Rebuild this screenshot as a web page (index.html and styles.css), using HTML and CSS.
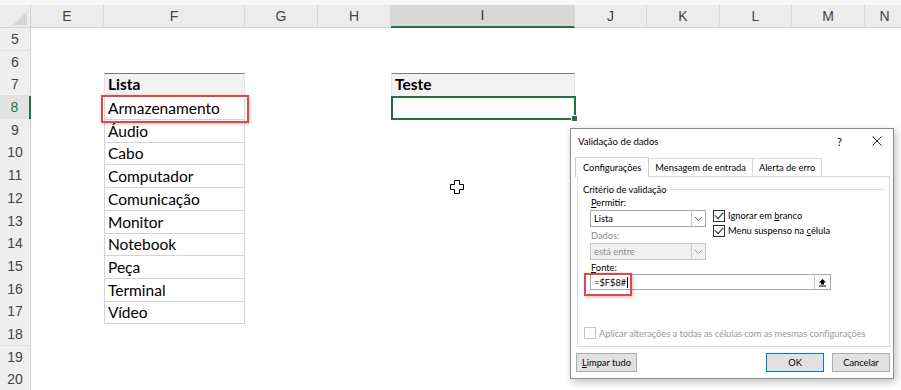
FILE: index.html
```html
<!DOCTYPE html>
<html lang="pt">
<head>
  <meta charset="UTF-8">
  <title>Validação de dados</title>
  <link rel="stylesheet" href="styles.css">
</head>
<body>

<div class="sheet">
  <div class="topstrip"></div>

  <div class="row head">
    <div class="corner"><span class="tri"></span></div>
    <div class="colhead">E</div>
    <div class="colhead">F</div>
    <div class="colhead">G</div>
    <div class="colhead">H</div>
    <div class="colhead sel">I</div>
    <div class="colhead">J</div>
    <div class="colhead">K</div>
    <div class="colhead">L</div>
    <div class="colhead">M</div>
    <div class="colhead">N</div>
  </div>

  <div class="row"><div class="num">5</div></div>
  <div class="row"><div class="num">6</div></div>
  <div class="row">
    <div class="num">7</div>
    <div class="cell col-f th">Lista</div>
    <div class="cell col-i th">Teste</div>
  </div>
  <div class="row">
    <div class="num cur">8</div>
    <div class="cell col-f td marked">Armazenamento</div>
    <div class="cell col-i active"><span class="handle"></span></div>
  </div>
  <div class="row"><div class="num">9</div><div class="cell col-f td">Áudio</div></div>
  <div class="row"><div class="num">10</div><div class="cell col-f td">Cabo</div></div>
  <div class="row"><div class="num">11</div><div class="cell col-f td">Computador</div></div>
  <div class="row"><div class="num">12</div><div class="cell col-f td">Comunicação</div></div>
  <div class="row"><div class="num">13</div><div class="cell col-f td">Monitor</div></div>
  <div class="row"><div class="num">14</div><div class="cell col-f td">Notebook</div></div>
  <div class="row"><div class="num">15</div><div class="cell col-f td">Peça</div></div>
  <div class="row"><div class="num">16</div><div class="cell col-f td">Terminal</div></div>
  <div class="row"><div class="num">17</div><div class="cell col-f td">Vídeo</div></div>
  <div class="row"><div class="num">18</div></div>
  <div class="row"><div class="num">19</div></div>
  <div class="row"><div class="num">20</div></div>

  <svg class="pointer" width="14" height="14" viewBox="0 0 14 14">
    <path d="M4.5 0.5h5v4h4v5h-4v4h-5v-4h-4v-5h4z" fill="#fff" stroke="#000" stroke-width="1"/>
  </svg>
</div>

<div class="dialog">
  <div class="titlebar">
    <span class="title">Validação de dados</span>
    <span class="help">?</span>
    <svg class="close" width="10" height="10" viewBox="0 0 10 10"><path d="M0.5 0.5l9 9M9.5 0.5l-9 9" stroke="#222" stroke-width="1"/></svg>
  </div>

  <div class="tabs">
    <div class="tab on">Configurações</div>
    <div class="tab">Mensagem de entrada</div>
    <div class="tab">Alerta de erro</div>
  </div>

  <div class="panel">
    <div class="group">Critério de validação</div>

    <div class="fields">
      <div class="left">
        <div class="label"><u>P</u>ermitir:</div>
        <div class="combo">
          <span class="value">Lista</span>
          <span class="drop"><svg width="9" height="6" viewBox="0 0 9 6"><path d="M1 1l3.5 3.5L8 1" fill="none" stroke="#666" stroke-width="1"/></svg></span>
        </div>
        <div class="label off">Dados:</div>
        <div class="combo disabled">
          <span class="value">está entre</span>
          <span class="drop"><svg width="9" height="6" viewBox="0 0 9 6"><path d="M1 1l3.5 3.5L8 1" fill="none" stroke="#999" stroke-width="1"/></svg></span>
        </div>
      </div>
      <div class="checks">
        <div class="check"><span class="box on"></span><span>Ignorar em <u>b</u>ranco</span></div>
        <div class="check"><span class="box on"></span><span>Menu suspenso na <u>c</u>élula</span></div>
      </div>
    </div>

    <div class="label src"><u>F</u>onte:</div>
    <div class="source">
      <span class="formula">=$F$8#<span class="caret"></span></span>
      <span class="collapse"><svg width="9" height="9" viewBox="0 0 9 9"><path d="M4.5 1L1 4.5h2v2h3v-2h2z" fill="#000"/><rect x="1" y="7.5" width="7" height="1" fill="#000"/></svg></span>
      <span class="redbox"></span>
    </div>

    <div class="check apply"><span class="box"></span><span>Aplicar alterações a todas as células com as mesmas configurações</span></div>
  </div>

  <div class="buttons">
    <div class="btn clear"><u>L</u>impar tudo</div>
    <div class="spacer"></div>
    <div class="btn ok">OK</div>
    <div class="btn cancel">Cancelar</div>
  </div>
</div>

</body>
</html>
```

FILE: styles.css
```css
body {
  margin: 0;
  background: #fff;
  font-family: Lato, "Noto Sans", sans-serif;
  overflow: hidden;
}

.sheet {
  position: relative;
  width: 901px;
  height: 390px;
  overflow: hidden;
}

.topstrip {
  height: 5px;
  background: #f7f7f7;
}

.row {
  display: grid;
  grid-template-columns: 31px 73px 141px 73px 73px 184px 72px 73px 72px 73px 40px;
  height: 22.7px;
}

.row.head {
  height: 22px;
  background: #ececec;
  border-bottom: 1px solid #d2d2d2;
}

.corner {
  position: relative;
  border-right: 1px solid #d2d2d2;
}

.tri {
  position: absolute;
  right: 3px;
  bottom: 3px;
  width: 0;
  height: 0;
  border-left: 14px solid transparent;
  border-bottom: 14px solid #d6d6d6;
}

.colhead {
  border-right: 1px solid #dadada;
  text-align: center;
  font-family: "Liberation Sans", sans-serif;
  font-size: 14px;
  line-height: 22px;
  color: #444;
}

.colhead.sel {
  background: #d8d8d8;
  border-bottom: 2px solid #217346;
  line-height: 21px;
  color: #333;
}

.num {
  grid-column: 1;
  background: #efefef;
  border-right: 1px solid #cfcfcf;
  border-bottom: 1px solid #e0e0e0;
  text-align: center;
  font-family: "Liberation Sans", sans-serif;
  font-size: 14px;
  line-height: 22px;
  color: #444;
}

.num.cur {
  color: #217346;
  background: #e2e2e2;
  border-right: 2px solid #217346;
}

.cell {
  font-size: 15.5px;
  line-height: 22px;
  padding-left: 3px;
  color: #000;
  white-space: nowrap;
}

.col-f { grid-column: 3; }
.col-i { grid-column: 6; }

.th {
  font-weight: bold;
  background: #f2f2f2;
  border-top: 1px solid #7b7b7b;
  border-left: 1px solid #e3e3e3;
  border-right: 1px solid #e3e3e3;
  line-height: 21px;
}

.td {
  border-left: 1px solid #d4d4d4;
  border-right: 1px solid #d4d4d4;
  border-bottom: 1px solid #d4d4d4;
  line-height: 21px;
  padding-top: 2px;
}

.marked {
  position: relative;
}

.marked::after {
  content: "";
  position: absolute;
  left: -4px;
  top: -1px;
  right: -5px;
  bottom: -4px;
  border: 2px solid #e2464b;
  box-shadow: 1px 1px 3px rgba(0,0,0,0.25);
}

.active {
  position: relative;
  border: 2px solid #217346;
  margin-right: -1px;
}

.handle {
  position: absolute;
  right: -4px;
  bottom: -4px;
  width: 5px;
  height: 5px;
  background: #217346;
  border: 1px solid #fff;
}

.pointer {
  position: absolute;
  left: 450px;
  top: 180px;
}

/* dialog */

.dialog {
  position: absolute;
  left: 570px;
  top: 128px;
  width: 322px;
  height: 249px;
  background: #fff;
  border: 1px solid #8c8c8c;
  box-shadow: 2px 3px 8px rgba(0,0,0,0.25);
  font-family: Lato, "Noto Sans", sans-serif;
  font-size: 9.3px;
  color: #000;
}

.titlebar {
  display: flex;
  align-items: center;
  height: 24px;
  padding: 0 7px;
  font-size: 9.6px;
}

.title {
  flex: 1;
}

.help {
  margin-right: 30px;
  font-size: 11px;
}

.close {
  margin-right: 4px;
}

.tabs {
  display: flex;
  margin: 4px 0 0 4px;
  height: 19px;
  align-items: flex-end;
}

.tab {
  height: 17px;
  line-height: 17px;
  padding: 0 6px;
  border: 1px solid #d9d9d9;
  border-bottom: none;
  margin-right: -1px;
  background: #fff;
}

.tab.on {
  height: 19px;
  line-height: 19px;
  padding: 0 7px;
  position: relative;
  top: 1px;
  z-index: 1;
  border-color: #cfcfcf;
}

.panel {
  margin: 0 3px 0 6px;
  height: 169px;
  border: 1px solid #d9d9d9;
  padding: 0 5px;
}

.group {
  display: flex;
  align-items: center;
  margin-top: 5px;
  height: 14px;
}

.group::after {
  content: "";
  flex: 1;
  border-top: 1px solid #dcdcdc;
  margin-left: 5px;
}

.fields {
  display: flex;
  margin-left: 7px;
}

.left {
  width: 116px;
}

.label {
  height: 13px;
  line-height: 13px;
  padding-left: 1px;
}

.label.off {
  color: #8a8a8a;
  margin-top: 2px;
}

.combo {
  display: flex;
  align-items: center;
  height: 15px;
  border: 1px solid #a8a8a8;
  margin-top: 1px;
  padding-left: 3px;
}

.value {
  flex: 1;
}

.combo.disabled {
  background: #f0f0f0;
  border-color: #c8c8c8;
  color: #8a8a8a;
}

.drop {
  width: 13px;
  height: 15px;
  border-left: 1px solid #c8c8c8;
  display: flex;
  align-items: center;
  justify-content: center;
}

.checks {
  margin-left: 7px;
  margin-top: 12px;
}

.check {
  display: flex;
  align-items: center;
  height: 15px;
  white-space: nowrap;
}

.box {
  width: 10px;
  height: 10px;
  border: 1px solid #333;
  margin-right: 3px;
  position: relative;
}

.box.on::after {
  content: "";
  position: absolute;
  left: 1px;
  top: -1px;
  width: 7px;
  height: 4px;
  border-left: 1.3px solid #222;
  border-bottom: 1.3px solid #222;
  transform: translate(0, 2px) rotate(-48deg);
}

.label.src {
  margin-left: 7px;
  margin-top: 1px;
}

.source {
  position: relative;
  display: flex;
  align-items: center;
  margin-left: 7px;
  width: 239px;
  height: 14px;
  border: 1px solid #a8a8a8;
}

.formula {
  flex: 1;
  padding-left: 3px;
}

.caret {
  display: inline-block;
  width: 1px;
  height: 11px;
  background: #000;
  vertical-align: -2px;
  margin-left: 1px;
}

.collapse {
  width: 15px;
  height: 14px;
  border-left: 1px solid #c8c8c8;
  display: flex;
  align-items: center;
  justify-content: center;
}

.redbox {
  position: absolute;
  left: -7px;
  top: -2px;
  width: 44px;
  height: 19px;
  border: 2px solid #e2464b;
  box-shadow: 1px 1px 3px rgba(0,0,0,0.25);
}

.check.apply {
  margin-top: 35px;
  height: 16px;
  color: #9a9a9a;
  letter-spacing: -0.05px;
}

.check.apply .box {
  border-color: #c4c4c4;
  margin-left: 1px;
  margin-right: 3px;
}

.buttons {
  display: flex;
  margin: 6px 3px 0 5px;
}

.spacer {
  flex: 1;
}

.btn {
  height: 17px;
  line-height: 17px;
  border: 1px solid #adadad;
  background: #e1e1e1;
  text-align: center;
}

.btn.clear {
  width: 59px;
}

.btn.ok,
.btn.cancel {
  width: 56px;
}

.btn.ok {
  border: 1px solid #0078d7;
  margin-right: 8px;
}
```
